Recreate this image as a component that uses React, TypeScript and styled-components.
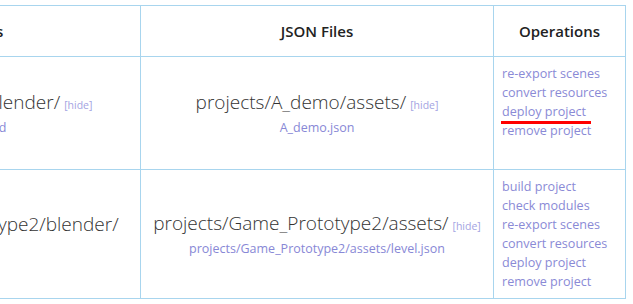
import styled, {createGlobalStyle} from 'styled-components'

const GlobalStyle = createGlobalStyle`
    html, body {
        margin: 0;
        padding: 0;
        background: #fff;
    }
    body {
        font-family: "Open Sans", "Liberation Sans", sans-serif;
        color: #333;
    }
`

const projects = [
    {
        blendDir: 'projects/A_demo/blender/',
        blendFile: 'A_demo.blend',
        showBlendHide: true,
        assetsDir: 'projects/A_demo/assets/',
        jsonFile: 'A_demo.json',
        ops: ['re-export scenes', 'convert resources', 'deploy project', 'remove project'],
        marked: 'deploy project',
        height: 113
    },
    {
        blendDir: 'projects/Game_Prototype2/blender/',
        blendFile: '',
        showBlendHide: false,
        assetsDir: 'projects/Game_Prototype2/assets/',
        jsonFile: 'projects/Game_Prototype2/assets/level.json',
        ops: ['build project', 'check modules', 're-export scenes', 'convert resources', 'deploy project', 'remove project'],
        marked: '',
        height: 128
    }
]

export default () => {
    return (
        <>
            <GlobalStyle/>
            <Viewport>
                <Table>
                    <colgroup>
                        <col style={{width: 352}}/>
                        <col style={{width: 353}}/>
                        <col style={{width: 132}}/>
                    </colgroup>
                    <thead>
                        <tr>
                            <HeadCell>Blend Files</HeadCell>
                            <HeadCell>JSON Files</HeadCell>
                            <HeadCell>Operations</HeadCell>
                        </tr>
                    </thead>
                    <tbody>
                        {projects.map((p) => (
                            <tr key={p.assetsDir} style={{height: p.height}}>
                                <PathCell>
                                    <MainPath>
                                        {p.blendDir}
                                        {p.showBlendHide && <Hide>[hide]</Hide>}
                                    </MainPath>
                                    <SubFile>{p.blendFile}</SubFile>
                                </PathCell>
                                <PathCell>
                                    <MainPath>
                                        {p.assetsDir}
                                        <Hide>[hide]</Hide>
                                    </MainPath>
                                    <SubFile>{p.jsonFile}</SubFile>
                                </PathCell>
                                <OpsCell>
                                    {p.ops.map((op) => (
                                        <OpLink key={op} $marked={op === p.marked}>
                                            <span>{op}</span>
                                        </OpLink>
                                    ))}
                                </OpsCell>
                            </tr>
                        ))}
                    </tbody>
                </Table>
            </Viewport>
        </>
    )
}

const Viewport = styled.div`
    width: 633px;
    height: 304px;
    overflow: hidden;
    padding-top: 5px;
    box-sizing: border-box;
`

const Table = styled.table`
    border-collapse: collapse;
    table-layout: fixed;
    width: 837px;
    margin-left: -212px;

    td, th {
        border: 1px solid #a8d5ee;
    }
`

const HeadCell = styled.th`
    height: 50px;
    padding: 0 8px;
    font-size: 15px;
    font-weight: 600;
    color: #222;
    text-align: center;
    vertical-align: middle;
`

const PathCell = styled.td`
    text-align: center;
    vertical-align: middle;
    padding: 0 8px;
`

const MainPath = styled.div`
    font-size: 19px;
    font-weight: 300;
    line-height: 26px;
    color: #333;
    white-space: nowrap;
`

const Hide = styled.span`
    margin-left: 4px;
    font-size: 10.5px;
    font-weight: 400;
    color: #a4a4e2;
    cursor: pointer;
`

const SubFile = styled.div`
    font-size: 12.5px;
    line-height: 20px;
    height: 20px;
    color: #8888d6;
    white-space: nowrap;
`

const OpsCell = styled.td`
    vertical-align: top;
    text-align: left;
    padding: 7px 8px;
    font-size: 12.6px;
    line-height: 19px;
`

const OpLink = styled.div<{ $marked?: boolean }>`
    color: #8a8ad6;
    white-space: nowrap;
    cursor: pointer;

    span {
        position: relative;
    }

    span::after {
        content: '';
        display: ${(p) => (p.$marked ? 'block' : 'none')};
        position: absolute;
        left: -1px;
        right: -5px;
        bottom: -4px;
        height: 3px;
        background: #f00;
    }
`
